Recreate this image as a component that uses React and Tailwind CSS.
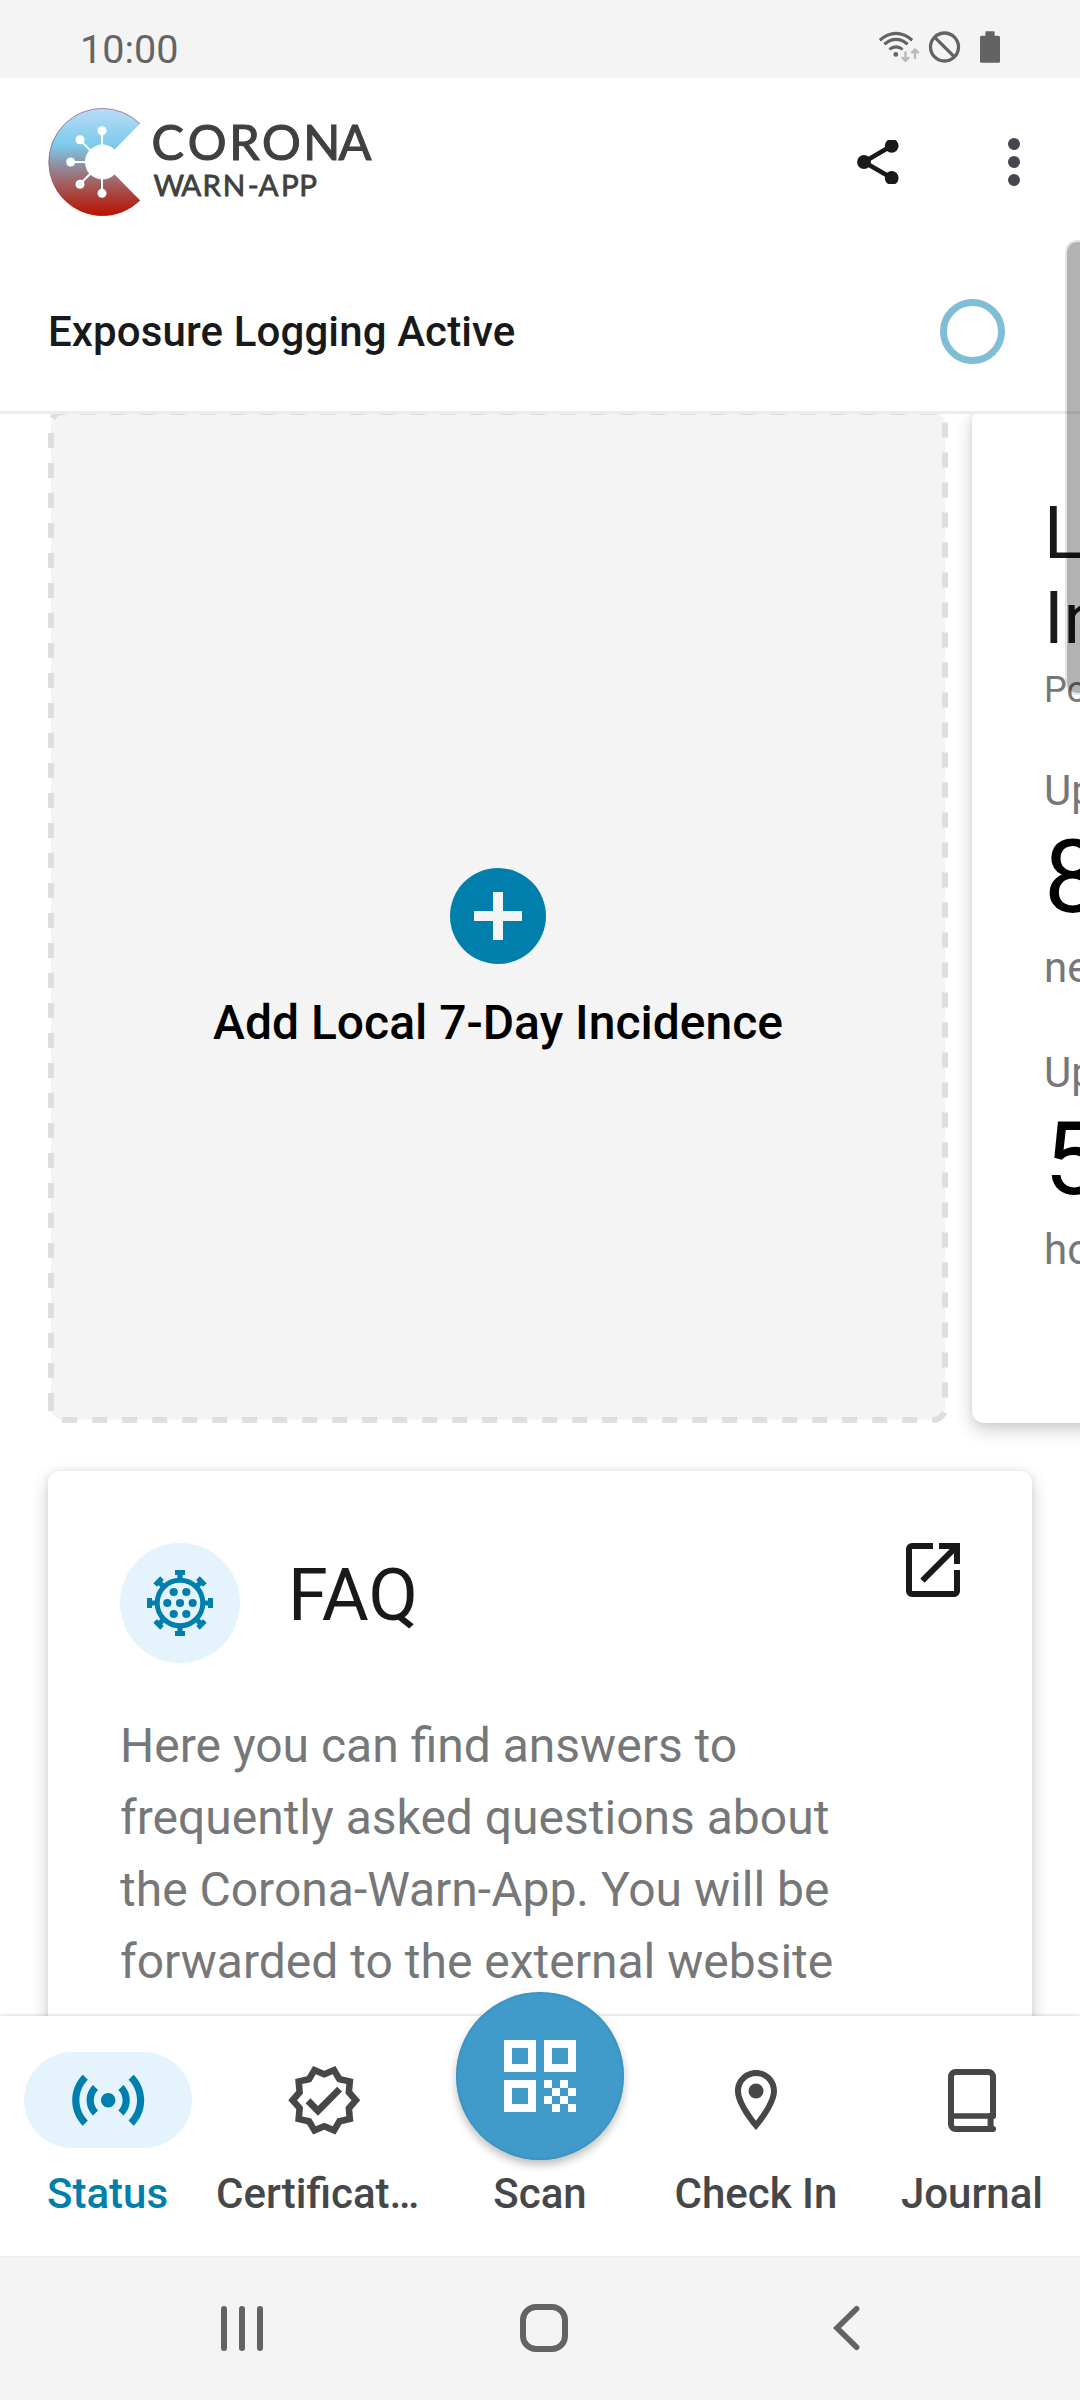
import React from "react";

const CARD_SHADOW = "shadow-[0_7px_18px_rgba(0,0,0,0.19),0_0_8px_rgba(0,0,0,0.07)]";

function StatusBar() {
  return (
    <div className="flex h-[78px] shrink-0 items-start justify-between bg-[#f4f4f4] pl-[80px] pr-[80px]">
      <span className="mt-[26px] text-[39.5px] leading-[47px] text-[#646464]">10:00</span>
      <div className="mt-[28px] flex items-start text-[#636363]">
        <svg width="44" height="38" viewBox="876 28 44 38" fill="none">
          <g stroke="#636363" strokeWidth="3.1">
            <path d="M879.8 40.2Q896 26.6 912.2 40.2" />
            <path d="M884.4 44.2Q896 34.4 907.6 44.2" />
            <path d="M889.4 49.4Q896 44.2 902.6 49.4" />
          </g>
          <circle cx="895.8" cy="54.4" r="2.4" fill="#636363" />
          <g stroke="#b9b9b9" strokeWidth="2.4">
            <path d="M905.5 51.6V60.4M901.8 57.2L905.5 60.8L909.2 57.2" />
            <path d="M915 59V50.2M911.3 53.2L915 49.6L918.7 53.2" />
          </g>
        </svg>
        <svg className="ml-[8px]" width="34" height="38" viewBox="928 28 34 38" fill="none" stroke="#636363" strokeWidth="3.3">
          <circle cx="944.5" cy="47" r="14" />
          <path d="M934.6 37.1L954.4 56.9" />
        </svg>
        <svg className="ml-[18px]" width="20" height="38" viewBox="980 28 20 38" fill="#636363">
          <rect x="980" y="35.8" width="20" height="27" rx="1.6" />
          <rect x="985.4" y="31.3" width="9.2" height="6" rx="0.8" />
        </svg>
      </div>
    </div>
  );
}

function Logo() {
  return (
    <svg width="330" height="110" viewBox="48 107 330 110">
      <defs>
        <linearGradient id="logoFill" x1="0" y1="108" x2="0" y2="216" gradientUnits="userSpaceOnUse">
          <stop offset="0" stopColor="#bbdcf7" />
          <stop offset="0.34" stopColor="#7ccbec" />
          <stop offset="0.52" stopColor="#8f92a6" />
          <stop offset="0.7" stopColor="#a3605f" />
          <stop offset="0.86" stopColor="#ad3328" />
          <stop offset="1" stopColor="#bb1100" />
        </linearGradient>
        <linearGradient id="logoEdge" x1="0" y1="108" x2="0" y2="216" gradientUnits="userSpaceOnUse">
          <stop offset="0" stopColor="#8d6f8c" />
          <stop offset="0.6" stopColor="#96536a" />
          <stop offset="1" stopColor="#bb1100" />
        </linearGradient>
      </defs>
      <path
        d="M140 123.8A53.6 53.6 0 1 0 140 200.2L114.6 174.6A17.5 17.5 0 1 1 114.6 149.4Z"
        fill="url(#logoFill)"
      />
      <path d="M140 123.8A53.6 53.6 0 1 0 140 200.2" fill="none" stroke="url(#logoEdge)" strokeWidth="0.8" />
      <g stroke="#ffffff" strokeWidth="2">
        <path d="M102 146V131M91 151L80 140M86 162H71M91 173L80 184M102 178V193" />
      </g>
      <g fill="#ffffff">
        <circle cx="102" cy="130.8" r="4.5" />
        <circle cx="80" cy="139.8" r="4.5" />
        <circle cx="70.7" cy="162" r="4.5" />
        <circle cx="80" cy="184.2" r="4.5" />
        <circle cx="102" cy="193.2" r="4.5" />
      </g>
      <g fill="#404040" stroke="#404040" fontFamily="Lato, sans-serif">
        <text x="151.6 187.8 229.3 262 303.2 338.6" y="160" fontSize="48.5" strokeWidth="1.2">CORONA</text>
        <text x="153.4 181.2 202.6 222.8 247.7 258.4 281.1 299.3" y="196.4" fontSize="29.5" strokeWidth="0.8">WARN-APP</text>
      </g>
    </svg>
  );
}

function AppBar() {
  return (
    <header className="flex h-[168px] shrink-0 items-center justify-between bg-white pl-[48px] pr-[60px]">
      <Logo />
      <div className="flex items-center gap-[108px]">
        <svg width="44" height="44" viewBox="856 140 44 44">
          <path d="M891.7 145.7L864 162L891.7 178" fill="none" stroke="#17191a" strokeWidth="4.6" />
          <g fill="#17191a">
            <circle cx="864" cy="162" r="6.9" />
            <circle cx="891.7" cy="145.8" r="6.9" />
            <circle cx="891.7" cy="178" r="6.9" />
          </g>
        </svg>
        <div className="flex flex-col gap-[6px]">
          <i className="size-[12px] rounded-full bg-[#49454f]" />
          <i className="size-[12px] rounded-full bg-[#49454f]" />
          <i className="size-[12px] rounded-full bg-[#49454f]" />
        </div>
      </div>
    </header>
  );
}

function LoggingRow() {
  return (
    <div className="flex h-[168px] shrink-0 items-center justify-between border-b-[3px] border-[#ececec] bg-white pl-[48px] pr-[75px] pt-[6px]">
      <span className="text-[42px] font-medium leading-[49px] tracking-[0.12px] text-[#17191a]">Exposure Logging Active</span>
      <i className="size-[65px] rounded-full border-[7px] border-[#80bed8]" />
    </div>
  );
}

function AddIncidenceCard() {
  return (
    <div className="relative flex h-[1014px] w-[900px] shrink-0 flex-col items-center">
      <svg className="absolute inset-0" width="900" height="1014" viewBox="48 409 900 1014" fill="none">
        <rect x="51" y="412" width="894" height="1008" rx="12" fill="#f4f4f4" />
        <g stroke="#dedede" strokeWidth="6">
          <path
            d="M51 1408V424A12 12 0 0 1 63 412H933A12 12 0 0 1 945 424V1408A12 12 0 0 1 933 1420H63A12 12 0 0 1 51 1408"
            strokeDasharray="15 15"
          />
          <path d="M51 1411V1408" />
        </g>
      </svg>
      <div className="relative mt-[459px] flex size-[96px] items-center justify-center rounded-full bg-[#007fad]">
        <svg width="48" height="48" viewBox="0 0 48 48" fill="#f4f4f4">
          <path d="M19 0H29V19H48V29H29V48H19V29H0V19H19Z" />
        </svg>
      </div>
      <span className="relative mt-[31px] text-[48px] font-medium leading-[56px] text-black">Add Local 7-Day Incidence</span>
    </div>
  );
}

function LocalIncidenceCard() {
  return (
    <div className={`h-[1014px] w-[900px] shrink-0 rounded-[12px] bg-white pl-[72px] pt-[82px] ${CARD_SHADOW}`}>
      <div className="text-[72px] leading-[85px] text-[#17191a]">
        <div>Lo</div>
        <div>In</div>
      </div>
      <div className="mt-[8px] text-[36px] leading-[42px] text-[#757778]">Po</div>
      <div className="mt-[55px] text-[42px] leading-[49px] text-[#757778]">Up</div>
      <div className="mt-[2px] text-[102px] leading-[120px] text-black">8</div>
      <div className="mt-[6px] text-[42px] leading-[49px] text-[#757778]">ne</div>
      <div className="mt-[56px] text-[42px] leading-[49px] text-[#757778]">Up</div>
      <div className="mt-[2px] text-[102px] leading-[120px] text-black">5</div>
      <div className="mt-[6px] text-[42px] leading-[49px] text-[#757778]">ho</div>
    </div>
  );
}

function VirusIcon() {
  return (
    <svg width="72" height="72" viewBox="-36 -36 72 72" fill="#007fad">
      <circle r="22.8" fill="none" stroke="#007fad" strokeWidth="5" />
      {[0, 90, 180, 270].map((a) => (
        <path key={a} transform={`rotate(${a})`} d="M-5 -33H5V-28H2.6V-23H-2.6V-28H-5Z" />
      ))}
      {[45, 135, 225, 315].map((a) => (
        <path key={a} transform={`rotate(${a})`} d="M-4.9 -32.8H4.9V-27.8H2.6V-23H-2.6V-27.8H-4.9Z" />
      ))}
      <circle r="4.1" />
      <circle cx="-12.7" r="4.1" />
      <circle cx="12.7" r="4.1" />
      <circle cx="-6.3" cy="-11" r="4.1" />
      <circle cx="6.3" cy="-11" r="4.1" />
      <circle cx="-6.3" cy="11" r="4.1" />
      <circle cx="6.3" cy="11" r="4.1" />
    </svg>
  );
}

function FaqCard() {
  return (
    <div className={`mx-[48px] mt-[48px] h-[900px] shrink-0 rounded-[12px] bg-white px-[72px] pt-[72px] ${CARD_SHADOW}`}>
      <div className="flex h-[120px] items-start">
        <div className="flex size-[120px] items-center justify-center rounded-full bg-[#e5f4fc]">
          <VirusIcon />
        </div>
        <h2 className="ml-[48px] mt-[11px] text-[72px] leading-[84px] text-[#17191a]">FAQ</h2>
        <svg className="-mr-[9px] -mt-[9px] ml-auto" width="72" height="72" viewBox="0 0 24 24" fill="#17191a">
          <path d="M19 19H5V5h7V3H5a2 2 0 0 0-2 2v14a2 2 0 0 0 2 2h14c1.1 0 2-.9 2-2v-7h-2v7zM14 3v2h3.59l-9.83 9.83 1.41 1.41L19 6.41V10h2V3h-7z" />
        </svg>
      </div>
      <p className="mt-[47px] whitespace-nowrap text-[48px] leading-[72px] text-[#757778]">
        Here you can find answers to
        <br />
        frequently asked questions about
        <br />
        the Corona-Warn-App. You will be
        <br />
        forwarded to the external website
      </p>
    </div>
  );
}

function SensorsIcon() {
  return (
    <svg width="86.4" height="86.4" viewBox="0 0 24 24" fill="#007fad">
      <path d="M7.76 16.24C6.67 15.16 6 13.66 6 12s.67-3.16 1.76-4.24l1.42 1.42C8.45 9.9 8 10.9 8 12c0 1.1.45 2.1 1.17 2.83l-1.41 1.41zM16.24 16.24C17.33 15.16 18 13.66 18 12s-.67-3.16-1.76-4.24l-1.42 1.42C15.55 9.9 16 10.9 16 12c0 1.1-.45 2.1-1.17 2.83l1.41 1.41zM12 10c-1.1 0-2 .9-2 2s.9 2 2 2 2-.9 2-2-.9-2-2-2zM20 12c0 2.21-.9 4.21-2.35 5.65l1.42 1.42C20.88 17.26 22 14.76 22 12s-1.12-5.26-2.93-7.07l-1.42 1.42C19.1 7.79 20 9.79 20 12zM6.35 6.35L4.93 4.93C3.12 6.74 2 9.24 2 12s1.12 5.26 2.93 7.07l1.42-1.42C4.9 16.21 4 14.21 4 12s.9-4.21 2.35-5.65z" />
    </svg>
  );
}

function VerifiedIcon() {
  return (
    <svg width="78.5" height="78.5" viewBox="0 0 24 24" fill="#464749">
      <path d="M23 11.99l-2.44-2.79.34-3.69-3.61-.82L15.4 1.5 12 2.96 8.6 1.5 6.71 4.69 3.1 5.5l.34 3.7L1 11.99l2.44 2.79-.34 3.7 3.61.82 1.89 3.2 3.4-1.47 3.4 1.46 1.89-3.19 3.61-.82-.34-3.69L23 11.99zm-3.95 1.48l-.56.65.08.85.18 1.95-1.9.43-.84.19-.44.74-.99 1.68-1.78-.77-.8-.34-.79.34-1.78.77-.99-1.67-.44-.74-.84-.19-1.9-.43.18-1.96.08-.85-.56-.65-1.29-1.47 1.29-1.48.56-.65-.09-.86-.18-1.94 1.9-.43.84-.19.44-.74.99-1.68 1.78.77.8.34.79-.34 1.78-.77.99 1.68.44.74.84.19 1.9.43-.18 1.95-.08.85.56.65 1.29 1.47-1.28 1.48z" />
      <path d="M10.09 13.75l-2.32-2.33-1.48 1.49 3.8 3.81 7.34-7.36-1.48-1.49z" />
    </svg>
  );
}

function PlaceIcon() {
  return (
    <svg width="72" height="72" viewBox="0 0 24 24" fill="#464749">
      <path d="M12 2C8.13 2 5 5.13 5 9c0 5.25 7 13 7 13s7-7.75 7-13c0-3.87-3.13-7-7-7zM7 9c0-2.76 2.24-5 5-5s5 2.24 5 5c0 2.88-2.88 7.19-5 9.88C9.92 16.21 7 11.85 7 9z" />
      <circle cx="12" cy="9" r="2.5" />
    </svg>
  );
}

function BookIcon() {
  return (
    <svg width="48" height="63" viewBox="948 2070 48 63" fill="none" stroke="#464749" strokeWidth="6" strokeLinecap="round">
      <path d="M993 2117V2077.5a4.5 4.5 0 0 0-4.5-4.5H955.5a4.5 4.5 0 0 0-4.5 4.5V2125.5a4.5 4.5 0 0 0 4.5 4.5H993" />
      <path d="M951 2117H993" strokeWidth="5.6" />
      <path d="M990.6 2117V2130" />
    </svg>
  );
}

function QrIcon() {
  return (
    <svg width="72" height="72" viewBox="0 0 9 9" fill="#ffffff" shapeRendering="crispEdges">
      <path fillRule="evenodd" d="M0 0H4V4H0ZM1 1V3H3V1ZM5 0H9V4H5ZM6 1V3H8V1ZM0 5H4V9H0ZM1 6V8H3V6Z" />
      <path d="M5 5h1v1h-1zM7 5h1v1h-1zM6 6h1v1h-1zM8 6h1v1h-1zM5 7h1v1h-1zM7 7h1v1h-1zM6 8h1v1h-1zM8 8h1v1h-1z" />
    </svg>
  );
}

function NavItem({ icon, label, active, start }) {
  return (
    <div className={`flex w-[216px] flex-col pt-[36px] ${start ? "items-start" : "items-center"}`}>
      <div
        className={
          active
            ? "flex h-[96px] w-[168px] items-center justify-center rounded-full bg-[#e5f4fc]"
            : "flex h-[96px] w-[168px] items-center justify-center self-center"
        }
      >
        {icon}
      </div>
      <span
        className={`mt-[21px] whitespace-nowrap text-[42px] font-medium leading-[49px] ${
          active ? "pr-[1px] text-[#007fad]" : "text-[#464749]"
        }`}
      >
        {label}
      </span>
    </div>
  );
}

function BottomNav() {
  return (
    <nav className="relative flex h-[240px] shrink-0 bg-white shadow-[0_-1px_3px_rgba(0,0,0,0.15)]">
      <NavItem active icon={<SensorsIcon />} label="Status" />
      <NavItem start icon={<VerifiedIcon />} label="Certificat…" />
      <NavItem icon={null} label="Scan" />
      <NavItem icon={<PlaceIcon />} label="Check In" />
      <NavItem icon={<BookIcon />} label="Journal" />
      <div className="absolute -top-[24px] left-[456px] flex size-[168px] items-center justify-center rounded-full bg-[#419bca] shadow-[0_5px_9px_rgba(0,0,0,0.25),inset_0_0_3px_rgba(0,90,140,0.4)]">
        <QrIcon />
      </div>
    </nav>
  );
}

function SystemNav() {
  return (
    <div className="flex h-[144px] shrink-0 items-center bg-[#f4f4f4] pl-[221px]">
      <div className="flex gap-[12px]">
        <i className="h-[45px] w-[6px] rounded-full bg-[#636363]" />
        <i className="h-[45px] w-[6px] rounded-full bg-[#636363]" />
        <i className="h-[45px] w-[6px] rounded-full bg-[#636363]" />
      </div>
      <i className="ml-[257px] size-[48px] rounded-[16px] border-[6px] border-[#636363]" />
      <svg className="ml-[264px]" width="30" height="48" viewBox="832 2304 30 48" fill="none" stroke="#636363" strokeWidth="5.6" strokeLinecap="round">
        <path d="M856.6 2308.8L837 2328L856.6 2347.2" />
      </svg>
    </div>
  );
}

export default function App() {
  return (
    <div className="relative flex h-[2400px] w-[1080px] flex-col overflow-hidden bg-white font-[Roboto,sans-serif]">
      <StatusBar />
      <AppBar />
      <LoggingRow />
      <main className="h-[1602px] shrink-0 overflow-hidden bg-white">
        <div className="-mt-[5px] flex gap-[24px] pl-[48px]">
          <AddIncidenceCard />
          <LocalIncidenceCard />
        </div>
        <FaqCard />
      </main>
      <BottomNav />
      <SystemNav />
      <div className="absolute right-0 top-[240px] h-[455px] w-[15px] rounded-l-[12px] border-y-2 border-l-2 border-black/10 bg-black/30 bg-clip-padding" />
    </div>
  );
}
